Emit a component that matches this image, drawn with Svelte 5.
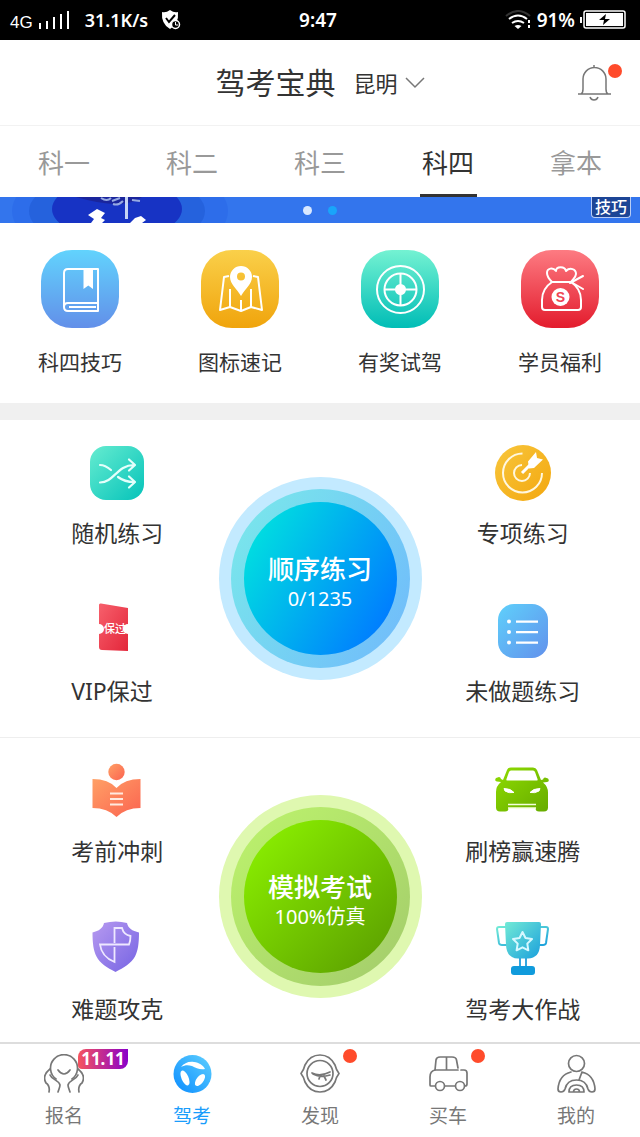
<script>
	const tabs = ['科一', '科二', '科三', '科四', '拿本'];
	let activeTab = $state('科四');
	let activePage = $state('驾考');
</script>

<svelte:head>
	<title>驾考宝典</title>
</svelte:head>

{#snippet bookIcon()}
	<svg viewBox="0 0 78 78" fill="none" stroke="#fff" stroke-width="2" stroke-linejoin="round">
		<path d="M57 53V19H27q-4 0-4 4v34q0 4 4 4h30v-2M57 53H27q-4 0-4 4M57 53v8M55 57H28" />
		<path d="M42.5 19h9.5v20l-4.7-3.5-4.8 3.5z" fill="#fff" stroke="none" />
	</svg>
{/snippet}

{#snippet mapIcon()}
	<svg viewBox="0 0 78 78" fill="none" stroke="#fff" stroke-width="2" stroke-linejoin="round">
		<path d="M28 26l-5 1-4 33 10-3 11 4 10-4 11 3-4-33-5-1" />
		<path d="M29 39v18M40 50v11M50 39v18" />
		<path
			d="M40 46c-4-7-11-12-11-19a11 11 0 0 1 22 0c0 7-7 12-11 19zM40 22.5a4 4 0 1 0 0 8 4 4 0 0 0 0-8z"
			fill="#fff"
			fill-rule="evenodd"
			stroke="none"
		/>
	</svg>
{/snippet}

{#snippet targetWheelIcon()}
	<svg viewBox="0 0 78 78" fill="none" stroke="#fff" stroke-width="2">
		<circle cx="39.5" cy="39.5" r="23.5" />
		<circle cx="39.5" cy="39.5" r="16" />
		<path d="M39.5 24v31M24 39.5h31" />
		<circle cx="39.5" cy="39.5" r="5.5" fill="#fff" stroke="none" />
	</svg>
{/snippet}

{#snippet bagIcon()}
	<svg
		viewBox="0 0 78 78"
		fill="none"
		stroke="#fff"
		stroke-width="2"
		stroke-linejoin="round"
		stroke-linecap="round"
	>
		<path d="M31 32c-3-3-5-6-5-9 0-5 6-6 9-2 0-5 9-5 10 0 4-4 10-2 10 3 0 3-3 5-5 8z" />
		<path d="M31 32c-6 4-10 11-10 18v7q0 3 3 3h33q3 0 3-3v-7c0-7-4-14-10-18" />
		<path d="M49 33l13-7M50 32l12 7" />
		<circle cx="39.5" cy="47" r="9" fill="#fff" stroke="none" />
		<text x="39.5" y="52" class="coin">S</text>
	</svg>
{/snippet}

{#snippet shuffleIcon()}
	<svg
		viewBox="0 0 56 56"
		fill="none"
		stroke="#e4fffb"
		stroke-width="2.2"
		stroke-linecap="round"
		stroke-linejoin="round"
	>
		<rect x="1" y="1" width="54" height="54" rx="16" fill="url(#teal)" stroke="none" />
		<path d="M11 37.5c14 0 17-17.5 34-17.5M40 14.500l6 5.500-6 5.500" />
		<path d="M11 20c4.500 0 7.500 2 11 5M29 32c4 3 9 5 16 5M40 31.500l6 5.500-6 5.500" />
	</svg>
{/snippet}

{#snippet ticketIcon()}
	<svg viewBox="0 0 56 56">
		<path
			d="M10 2q0-2 2-1.500L39 5v16a5 5 0 0 0 0 10v17l-26-1q-3 0-3-3V31a5 5 0 0 0 0-10z"
			fill="url(#red)"
		/>
		<text x="26" y="30" class="ticket">保过</text>
	</svg>
{/snippet}

{#snippet dartIcon()}
	<svg viewBox="0 0 56 56" fill="none" stroke="#fff7df" stroke-width="2">
		<circle cx="28" cy="28" r="28" fill="url(#amber)" stroke="none" />
		<path d="M27.5 8.500A19.500 19.500 0 1 0 47 28" />
		<path d="M27 20a8 8 0 1 0 8 8" />
		<path d="M27 28l10-10" stroke="#fff" stroke-width="3" />
		<path d="M33 16.500L41 7l1 6 6 1.500-9 8.500-5 .5z" fill="#fff" stroke="none" />
	</svg>
{/snippet}

{#snippet listIcon()}
	<svg viewBox="0 0 56 56" fill="#fff">
		<rect x="3" y="1" width="50" height="54" rx="16" fill="url(#blue)" />
		<circle cx="14" cy="18.5" r="2" />
		<circle cx="14" cy="29" r="2" />
		<circle cx="14" cy="39.5" r="2" />
		<path d="M21 17.500h22v2.300H21zM21 28h22v2.300H21zM21 38.500h22v2.300H21z" />
	</svg>
{/snippet}

{#snippet readerIcon()}
	<svg viewBox="0 0 56 56">
		<circle cx="27.5" cy="9" r="8.2" fill="url(#orange)" />
		<path
			d="M3.500 16q16 0 24 9 8-9 24-9v29q-15 0-24 9-9-9-24-9z"
			fill="url(#orange)"
		/>
		<path d="M21 30.500h13M21 36h13M21 41.500h13" stroke="#ffe9df" stroke-width="2" />
	</svg>
{/snippet}

{#snippet shieldIcon()}
	<svg viewBox="0 0 56 56">
		<path
			d="M15 2q12-3 23 0c1 5 5 8 12 9.500 0 11-1 18-4 24-4 7-11 11-19.500 15.500C18 46.500 11 42.500 7.500 35.500c-3-6-4-13-4-24C10 10 14 7 15 2z"
			fill="url(#purple)"
		/>
		<path
			d="M25.500 22V7h7.500c1 4 3 7 8.500 8q0 5-1.500 8.500H11c1 8 6 14 14.500 17.500V26"
			fill="none"
			stroke="#eee8ff"
			stroke-width="1.8"
		/>
	</svg>
{/snippet}

{#snippet raceCarIcon()}
	<svg viewBox="0 0 56 56">
		<path
			fill="url(#green)"
			fill-rule="evenodd"
			d="M8 17l4-10q1-2.500 4-2.500h22q3 0 4 2.500l4 10 2-.5q.5-2 2-2l3 1q2 3-1 3.500l-4 .5q5 4 5 10v15q0 4-4 4h-5q-3.500 0-3.500-3.500h-27q0 3.500-3.500 3.500H5q-4 0-4-4V29q0-6 5-10l-4-.5q-3-.5-1-3.500l3-1q1.500 0 2 2zM16 7.500q-1.500 0-2 1.500L11.500 16q-.5 1.500 1 1.500h29q1.500 0 1-1.500L40 9q-.5-1.500-2-1.500z"
		/>
		<path d="M9 25.500q7 0 10 4-5 1-9-1.500zM45 25.500q-7 0-10 4 5 1 9-1.500z" fill="#fff" stroke="#fff" />
		<path d="M13 41.500h28M13 45h28" stroke="#f4ffdc" stroke-width="1.5" />
	</svg>
{/snippet}

{#snippet cupIcon()}
	<svg viewBox="0 0 56 56" stroke-linejoin="round">
		<path
			d="M11 6H4q-2 0-2 2l2 14q.5 2 3 2h5M44 6h7q2 0 2 2l-2 14q-.5 2-3 2h-5"
			fill="none"
			stroke="url(#aqua)"
			stroke-width="2"
		/>
		<path
			d="M12 1h32q2 0 2 2l-1 21q-.5 13-12 13.500H23Q11.500 37 11 24L10 3q0-2 2-2z"
			fill="url(#aqua)"
		/>
		<path d="M25 37v9M31 37v9" stroke="#35a6df" stroke-width="2" />
		<rect x="16" y="45" width="24" height="9" rx="3" fill="#109bdc" />
		<path
			d="M27.500 11l3 6 6.500 1-4.700 4.600 1 6.700-5.800-3-5.900 3 1.100-6.700L18 18l6.500-1z"
			fill="none"
			stroke="#d6f8ff"
			stroke-width="2"
		/>
	</svg>
{/snippet}

{#snippet signupIcon()}
	<svg viewBox="0 0 40 40" class="line">
		<path d="M12 25A13.500 13.500 0 1 1 28 25" />
		<path d="M14 16q6 8 12 0" />
		<path d="M6 15c-5 4-7 9-4 14 3 2 4 4 3 9M34 15c5 4 7 9 4 14-3 2-4 4-3 9" />
		<path d="M6 21c2 5 9 5 10 10 0 2-1 4-2 7M34 21c-2 5-9 5-10 10 0 2 1 4 2 7" />
	</svg>
{/snippet}

{#snippet wheelIcon()}
	<svg viewBox="0 0 40 40">
		<circle cx="20.5" cy="20" r="19" fill="url(#sky)" />
		<path d="M9 13c3-4 8-6 13-5 5 .5 9 3 11 7-5 1-9-1-13-3-4-1-7-1-11 1z" fill="#fff" />
		<ellipse cx="13" cy="24" rx="3.500" ry="8" transform="rotate(-24 13 24)" fill="#fff" />
		<ellipse cx="28" cy="26" rx="3.500" ry="7" transform="rotate(38 28 26)" fill="#fff" />
	</svg>
{/snippet}

{#snippet discoverIcon()}
	<svg viewBox="0 0 40 40" class="line">
		<path d="M20 1c7 0 12 4 15 10 1 4 2 6 4 8.500-2 2.500-3 4.500-4 8.500-3 6-8 10-15 10S8 34 5 28c-1-4-2-6-4-8.500 2-2.500 3-4.500 4-8.500C8 5 13 1 20 1z" />
		<circle cx="20" cy="19.500" r="13" />
		<path d="M12 19q8 4 18-1M13 20q7 4 17 1M20 22l-1 3M24 22l2 4" />
	</svg>
{/snippet}

{#snippet carIcon()}
	<svg viewBox="0 0 40 40" class="line">
		<path d="M7 16L8 6q.5-3 4-3h12q4 0 4.500 3L30 14M18.500 3v13M7 16h23" />
		<path d="M7 16q-5 1-5 7v8q0 1 1 1h4M33 16h3q3 0 3 3v11q0 2-2 2M17 32h10" />
		<circle cx="12" cy="32" r="4.5" />
		<circle cx="32" cy="32" r="4.5" />
	</svg>
{/snippet}

{#snippet driverIcon()}
	<svg viewBox="0 0 40 40" class="line">
		<circle cx="20.500" cy="9.500" r="8" />
		<path
			d="M15 18Q3 21 2 35q0 3 3 3 3 0 4-3 2-9 11.500-9T32 35q1 3 4 3t3-3Q38 21 26 18M26 18l-3 8"
		/>
		<path d="M13 38q0-7 7.500-7t7.500 7zM17.500 38q0-3 3-3t3 3" />
	</svg>
{/snippet}

{#snippet quick(kind, label, icon)}
	<button class="quick">
		<span class="tile {kind}">{@render icon()}</span>
		<span>{label}</span>
	</button>
{/snippet}

{#snippet entry(label, icon)}
	<button class="entry">
		<span class="entry-icon">{@render icon()}</span>
		<span class="entry-label">{label}</span>
	</button>
{/snippet}

{#snippet page(label, icon, badge)}
	<a
		href="#{label}"
		class="page"
		class:active={activePage === label}
		onclick={() => (activePage = label)}
	>
		<span class="page-icon">
			{@render icon()}
			{#if badge === 'dot'}
				<i class="dot"></i>
			{:else if badge}
				<b class="sale">{badge}</b>
			{/if}
		</span>
		<span>{label}</span>
	</a>
{/snippet}

<!-- gradients shared by the icons -->
<svg class="defs" aria-hidden="true">
	<defs>
		<linearGradient id="teal" x2="1" y2="1"><stop stop-color="#66ecd0" /><stop offset="1" stop-color="#05c3ba" /></linearGradient>
		<linearGradient id="red" x2="1" y2="1"><stop stop-color="#f7606c" /><stop offset="1" stop-color="#e3263a" /></linearGradient>
		<linearGradient id="amber" x2="1" y2="1"><stop stop-color="#f8c63c" /><stop offset="1" stop-color="#f3a70e" /></linearGradient>
		<linearGradient id="blue" x2="1" y2="1"><stop stop-color="#5fd0fb" /><stop offset="1" stop-color="#6291ec" /></linearGradient>
		<linearGradient id="orange" x2="1" y2="1"><stop stop-color="#ffa066" /><stop offset="1" stop-color="#fb6350" /></linearGradient>
		<linearGradient id="purple" x2="1" y2="1"><stop stop-color="#b79af0" /><stop offset="1" stop-color="#7563e3" /></linearGradient>
		<linearGradient id="green" x2="1" y2="1"><stop stop-color="#8fdc00" /><stop offset="1" stop-color="#66ab00" /></linearGradient>
		<linearGradient id="aqua" x2="1" y2="1"><stop stop-color="#72ead6" /><stop offset="1" stop-color="#1ba0dc" /></linearGradient>
		<linearGradient id="sky" x1="1" x2="0" y2="1"><stop stop-color="#5fd0ff" /><stop offset="1" stop-color="#0a8cff" /></linearGradient>
	</defs>
</svg>

<div class="app">
	<div class="status">
		<div class="status-side">
			<span class="network">4G</span>
			<svg width="34" height="20" viewBox="0 0 34 20" fill="#fff">
				<path d="M1 13h2v6H1zM8 11h2v8H8zM15 7h2v12h-2zM22 4h2v15h-2zM29 1h2v18h-2z" />
			</svg>
			<span class="speed">31.1K/s</span>
			<svg width="20" height="20" viewBox="0 0 20 20">
				<path d="M9 0q4 3 8 2 1 12-8 17Q0 14 1 2q4 1 8-2z" fill="#fff" />
				<path d="M5 8l3 4 6-7" stroke="#000" stroke-width="2" fill="none" />
				<circle cx="14.5" cy="14.5" r="4" fill="#000" stroke="#fff" stroke-width="1.5" />
				<path d="M14.500 12v3H17" stroke="#fff" fill="none" />
			</svg>
		</div>
		<span>9:47</span>
		<div class="status-side right">
			<svg width="27" height="20" viewBox="0 0 27 20" fill="none" stroke="#fff" stroke-width="2">
				<path d="M1 6q12-10 24 0" stroke="#333" />
				<path d="M4 9q9-7 18 0M7 13q6-4 12 0" />
				<path d="M9.500 16q3.500-2 7 0L13 19z" fill="#fff" stroke="none" />
				<path d="M24 10v3M24 15v3" />
			</svg>
			<span>91%</span>
			<svg width="46" height="20" viewBox="0 0 46 20">
				<path d="M0 7h2v6H0z" fill="#fff" />
				<rect x="4" y="1" width="41" height="17" rx="2" fill="none" stroke="#fff" stroke-width="1.5" />
				<rect x="6" y="3" width="37" height="13" fill="#fff" />
				<path d="M26 4l-7 6h5l-1 5 7-6h-5z" fill="#000" />
			</svg>
		</div>
	</div>

	<header>
		<div class="heading">
			<h1>驾考宝典</h1>
			<button class="city">
				昆明
				<svg width="20" height="12" viewBox="0 0 20 12" fill="none" stroke="#777" stroke-width="1.5">
					<path d="M1 1l9 9 9-9" />
				</svg>
			</button>
		</div>
		<button class="bell" aria-label="消息">
			<svg width="46" height="38" viewBox="0 0 46 38" fill="none" stroke="#777" stroke-width="1.5">
				<path d="M17 1v3M1 30h33M4 30q2-1 2-5V15a11 11 0 0 1 23 0v10q0 4 2 5M13 33q1 3 4 3t4-3" />
				<circle cx="38" cy="7" r="7" fill="#ff4b2b" stroke="none" />
			</svg>
		</button>
	</header>

	<div class="tabs" role="tablist">
		{#each tabs as tab}
			<button
				role="tab"
				aria-selected={activeTab === tab}
				class:active={activeTab === tab}
				onclick={() => (activeTab = tab)}>{tab}</button
			>
		{/each}
	</div>

	<div class="banner">
		<svg width="240" height="26" viewBox="0 0 240 26">
			<ellipse cx="120" cy="14" rx="108" ry="50" fill="#2d6dea" />
			<ellipse cx="117" cy="14" rx="88" ry="38" fill="#2562dd" />
			<ellipse cx="117" cy="12" rx="65" ry="30" fill="#1733c4" />
			<path d="M76 0h66q-18 14-66 0z" fill="#1a259c" />
			<path d="M126.500 0v22" stroke="#c5d4f5" stroke-width="3" />
			<path
				d="M101 1q6 4 10 0M113 7q5 2 10-3M112 4l8-3M132 3l8 1"
				stroke="#96a9e2"
				stroke-width="2"
				fill="none"
			/>
			<path d="M88 18l9-6 8 4-4 5 4 2-3 3H91l3-4zM130 26l5-5 6-2 5 4-4 3z" fill="#fff" />
		</svg>
		<div class="dots"><i></i><i class="on"></i></div>
		<span class="tip">技巧</span>
	</div>

	<div class="quicks">
		{@render quick('blue', '科四技巧', bookIcon)}
		{@render quick('yellow', '图标速记', mapIcon)}
		{@render quick('teal', '有奖试驾', targetWheelIcon)}
		{@render quick('red', '学员福利', bagIcon)}
	</div>

	<main>
		<section>
			<div class="column left">
				{@render entry('随机练习', shuffleIcon)}
				{@render entry('VIP保过', ticketIcon)}
			</div>
			<button class="round practice">
				<span class="ring">
					<span class="core">
						<strong>顺序练习</strong>
						<span>0/1235</span>
					</span>
				</span>
			</button>
			<div class="column">
				{@render entry('专项练习', dartIcon)}
				{@render entry('未做题练习', listIcon)}
			</div>
		</section>

		<section>
			<div class="column left">
				{@render entry('考前冲刺', readerIcon)}
				{@render entry('难题攻克', shieldIcon)}
			</div>
			<button class="round exam">
				<span class="ring">
					<span class="core">
						<strong>模拟考试</strong>
						<span>100%仿真</span>
					</span>
				</span>
			</button>
			<div class="column">
				{@render entry('刷榜赢速腾', raceCarIcon)}
				{@render entry('驾考大作战', cupIcon)}
			</div>
		</section>
	</main>

	<nav>
		{@render page('报名', signupIcon, '11.11')}
		{@render page('驾考', wheelIcon)}
		{@render page('发现', discoverIcon, 'dot')}
		{@render page('买车', carIcon, 'dot')}
		{@render page('我的', driverIcon)}
	</nav>
</div>

<style>
	:global(body) {
		margin: 0;
		background-color: #fff;
	}

	.app {
		min-height: 100vh;
		display: flex;
		flex-direction: column;
		color: #333;
		font-family: 'Noto Sans', 'Noto Sans CJK SC', sans-serif;
	}

	.defs {
		position: absolute;
		width: 0;
		height: 0;
	}

	button {
		padding: 0;
		border: none;
		background: none;
		color: inherit;
		font: inherit;
		cursor: pointer;
	}

	svg {
		display: block;
	}

	.status {
		height: 40px;
		padding: 0 14px 0 10px;
		display: grid;
		grid-template-columns: 1fr auto 1fr;
		align-items: center;
		background-color: #000;
		color: #fff;
		font-size: 19px;
		font-weight: 600;
	}

	.status-side {
		display: flex;
		align-items: center;
		gap: 5px;
	}

	.status-side.right {
		justify-content: flex-end;
	}

	.network {
		padding-top: 6px;
		font-family: 'Liberation Sans', sans-serif;
		font-size: 17px;
		font-weight: 400;
	}

	.speed {
		padding: 0 8px;
		font-size: 18px;
	}

	header {
		height: 85px;
		padding: 0 17px;
		display: grid;
		grid-template-columns: 1fr auto 1fr;
		align-items: center;
	}

	.heading {
		grid-column: 2;
		display: flex;
		align-items: center;
		gap: 18px;
	}

	h1 {
		margin: 0;
		font-size: 30px;
		font-weight: 400;
		line-height: 40px;
	}

	.city {
		display: flex;
		align-items: center;
		gap: 7px;
		font-size: 22px;
		line-height: 40px;
	}

	.bell {
		justify-self: end;
	}

	.tabs {
		height: 71px;
		display: flex;
		justify-content: space-around;
		border-top: 1px solid #f2f2f2;
	}

	.tabs button {
		width: 57px;
		border-top: 3px solid transparent;
		border-bottom: 3px solid transparent;
		color: #999;
		font-size: 26px;
	}

	.tabs .active {
		border-bottom-color: #333;
		color: #333;
	}

	.banner {
		position: relative;
		height: 26px;
		overflow: hidden;
		background-color: #3375ed;
	}

	.dots {
		position: absolute;
		inset: 0;
		display: flex;
		justify-content: center;
		align-items: center;
		gap: 16px;
	}

	.dots i {
		width: 9px;
		height: 9px;
		border-radius: 50%;
		background-color: #d9e8ff;
	}

	.dots .on {
		background-color: #19a5fa;
	}

	.tip {
		position: absolute;
		right: 9px;
		bottom: 5px;
		padding: 0 3px;
		border: 1px solid #b8cdf5;
		border-top: none;
		border-radius: 0 0 4px 4px;
		background-color: #1c4596;
		color: #fff;
		font-size: 16px;
		font-weight: 500;
		line-height: 20px;
	}

	.quicks {
		padding: 27px 0;
		display: grid;
		grid-template-columns: repeat(4, 1fr);
		border-bottom: 17px solid #f0f0f0;
	}

	.quick {
		display: flex;
		flex-direction: column;
		align-items: center;
		gap: 20px;
		font-size: 21px;
		line-height: 28px;
	}

	.tile {
		width: 78px;
		height: 78px;
		border-radius: 31px;
	}

	.tile.blue {
		background: linear-gradient(#62d3fd, #628fe9);
	}

	.tile.yellow {
		background: linear-gradient(#fad04a, #f0a40c);
	}

	.tile.teal {
		background: linear-gradient(#74f2d2, #00bdb6);
	}

	.tile.red {
		background: linear-gradient(#fd7b82, #e31c2d);
	}

	.coin {
		fill: #ef4453;
		stroke: none;
		font-family: 'Liberation Sans', sans-serif;
		font-size: 14px;
		font-weight: 700;
		text-anchor: middle;
	}

	.ticket {
		fill: #fff;
		font-size: 11px;
		font-weight: 500;
		text-anchor: middle;
	}

	main {
		flex: 1;
	}

	section {
		padding: 25px 16px 32px;
		display: grid;
		grid-template-columns: 1fr auto 1fr;
		align-items: start;
	}

	section + section {
		padding-bottom: 19px;
		border-top: 1px solid #eee;
	}

	.column {
		display: flex;
		flex-direction: column;
		align-items: center;
		gap: 56px;
	}

	.entry {
		display: flex;
		flex-direction: column;
		align-items: center;
		gap: 18px;
		font-size: 23px;
		line-height: 28px;
		white-space: nowrap;
	}

	.left .entry {
		width: 92px;
	}

	.left .entry-label {
		align-self: flex-start;
	}

	.entry-icon {
		width: 56px;
		height: 56px;
	}

	.round {
		margin-top: 32px;
		padding: 12px;
		border-radius: 50%;
	}

	.ring {
		display: block;
		padding: 13px;
		border-radius: 50%;
	}

	.core {
		width: 153px;
		height: 153px;
		padding-top: 8px;
		box-sizing: border-box;
		display: flex;
		flex-direction: column;
		align-items: center;
		justify-content: center;
		border-radius: 50%;
		color: #fff;
		font-size: 20px;
		line-height: 28px;
	}

	.core strong {
		font-size: 26px;
		font-weight: 500;
		line-height: 32px;
	}

	.practice {
		background-color: #c3eaff;
	}

	.practice .ring {
		background: linear-gradient(120deg, #7aeaea, #70b9fc);
	}

	.practice .core {
		background: linear-gradient(120deg, #00e2df 8%, #007dff 88%);
	}

	.exam {
		background-color: #dff8b0;
	}

	.exam .ring {
		background: linear-gradient(135deg, #bdf46c, #a3cb6c);
	}

	.exam .core {
		background: linear-gradient(135deg, #8aef00 8%, #5ea300 90%);
	}

	nav {
		padding: 10px 0 7px;
		display: grid;
		grid-template-columns: repeat(5, 1fr);
		border-top: 2px solid #ddd;
		background-color: #fff;
	}

	.page {
		display: flex;
		flex-direction: column;
		align-items: center;
		gap: 8px;
		color: #777;
		font-size: 19px;
		line-height: 28px;
		text-decoration: none;
	}

	.page.active {
		color: #1a9dfb;
	}

	.page-icon {
		position: relative;
		width: 40px;
		height: 40px;
	}

	.line {
		fill: none;
		stroke: #777;
		stroke-width: 1.7;
		stroke-linecap: round;
		stroke-linejoin: round;
	}

	.dot {
		position: absolute;
		top: -5px;
		left: 43px;
		width: 14px;
		height: 14px;
		border-radius: 50%;
		background-color: #ff4b2b;
	}

	.sale {
		position: absolute;
		top: -5px;
		left: 34px;
		width: 50px;
		border-radius: 8px 0 8px 4px;
		background: linear-gradient(90deg, #f6545f, #8a00c8);
		color: #fff;
		font-size: 17px;
		line-height: 20px;
		text-align: center;
	}
</style>
